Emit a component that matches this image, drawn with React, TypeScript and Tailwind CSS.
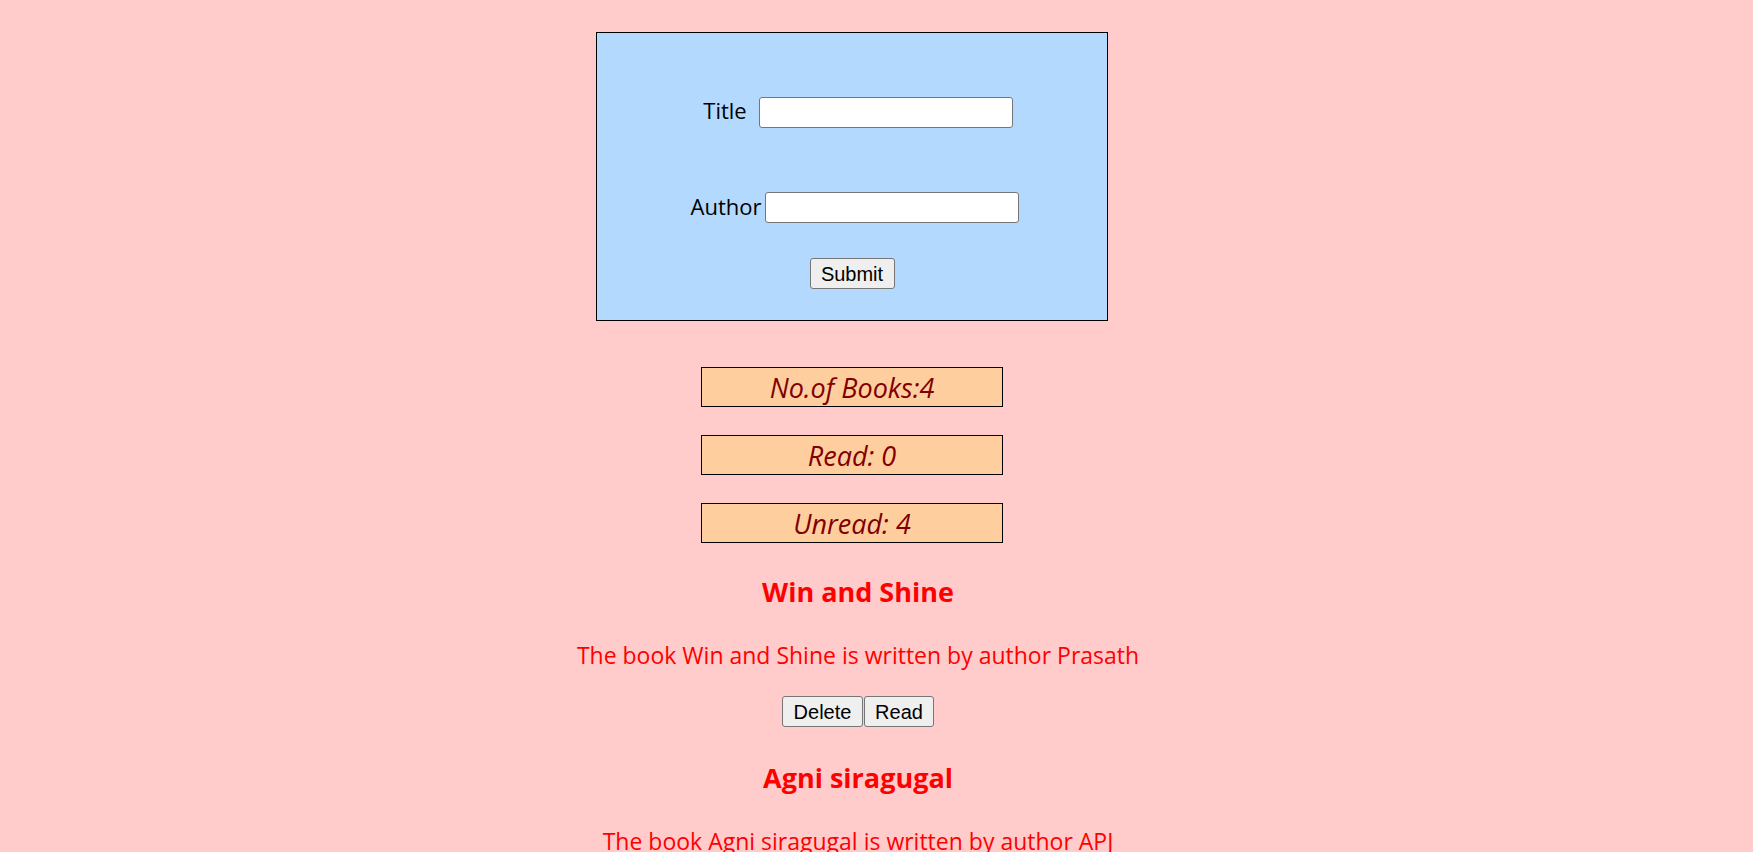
import { useState } from 'react'

type Book = { title: string; author: string; read: boolean }

const initialBooks: Book[] = [
  { title: 'Win and Shine', author: 'Prasath', read: false },
  { title: 'Agni siragugal', author: 'APJ', read: false },
  { title: 'Wings of Fire', author: 'Kalam', read: false },
  { title: 'Ponniyin Selvan', author: 'Kalki', read: false },
]

const ui = "font-['Open_Sans','Noto_Sans',sans-serif]"
const btn =
  "font-['Liberation_Sans',Arial,sans-serif] text-[20px] leading-none text-black bg-[#efefef] border border-[#767676] rounded-[3px] h-[31px]"
const stat =
  'w-[302px] h-[40px] border border-black bg-[#ffce9e] text-[#800000] italic text-[27px] leading-[39px] text-center'

export default function App() {
  const [books, setBooks] = useState<Book[]>(initialBooks)
  const [title, setTitle] = useState('')
  const [author, setAuthor] = useState('')

  const readCount = books.filter((b) => b.read).length

  const submit = (e: React.FormEvent) => {
    e.preventDefault()
    if (!title || !author) return
    setBooks([...books, { title, author, read: false }])
    setTitle('')
    setAuthor('')
  }

  return (
    <div className={`min-h-screen bg-[#ffcbcb] ${ui}`}>
      <div className="w-[1704px] flex flex-col items-center pt-[32px]">
        <form
          onSubmit={submit}
          className="w-[512px] h-[289px] border border-black bg-[#b3d9ff] flex flex-col items-center"
        >
          <div className="mt-[64px] flex items-center h-[31px] pl-[12px]">
            <label className="text-[22px] text-black mr-[12px] mb-[4px]">Title</label>
            <input
              value={title}
              onChange={(e) => setTitle(e.target.value)}
              className="w-[254px] h-[31px] bg-white border border-[#767676] rounded-[3px] px-1"
            />
          </div>
          <div className="mt-[64px] flex items-center h-[31px] pl-[6px]">
            <label className="text-[22px] text-black mr-[4px] mb-[3px]">Author</label>
            <input
              value={author}
              onChange={(e) => setAuthor(e.target.value)}
              className="w-[254px] h-[31px] bg-white border border-[#767676] rounded-[3px] px-1"
            />
          </div>
          <button type="submit" className={`${btn} mt-[35px] w-[85px]`}>
            Submit
          </button>
        </form>

        <div className="mt-[46px] flex flex-col gap-[28px]">
          <div className={stat}>No.of Books:{books.length}</div>
          <div className={stat}>Read: {readCount}</div>
          <div className={stat}>Unread: {books.length - readCount}</div>
        </div>
      </div>

      <div className="w-[1716px] flex flex-col items-center text-center text-[#ff0000]">
        {books.map((b, i) => (
          <div key={i} className="flex flex-col items-center">
            <h2 className="mt-[33px] h-[32px] leading-[32px] text-[27px] font-bold">{b.title}</h2>
            <p className="mt-[31px] h-[32px] leading-[32px] text-[23px]">
              The book {b.title} is written by author {b.author}
            </p>
            <div className="mt-[25px] mb-[2px] flex gap-[1px]">
              <button
                className={`${btn} w-[81px]`}
                onClick={() => setBooks(books.filter((_, j) => j !== i))}
              >
                Delete
              </button>
              <button
                className={`${btn} w-[70px]`}
                onClick={() => setBooks(books.map((x, j) => (j === i ? { ...x, read: true } : x)))}
              >
                Read
              </button>
            </div>
          </div>
        ))}
      </div>
    </div>
  )
}
